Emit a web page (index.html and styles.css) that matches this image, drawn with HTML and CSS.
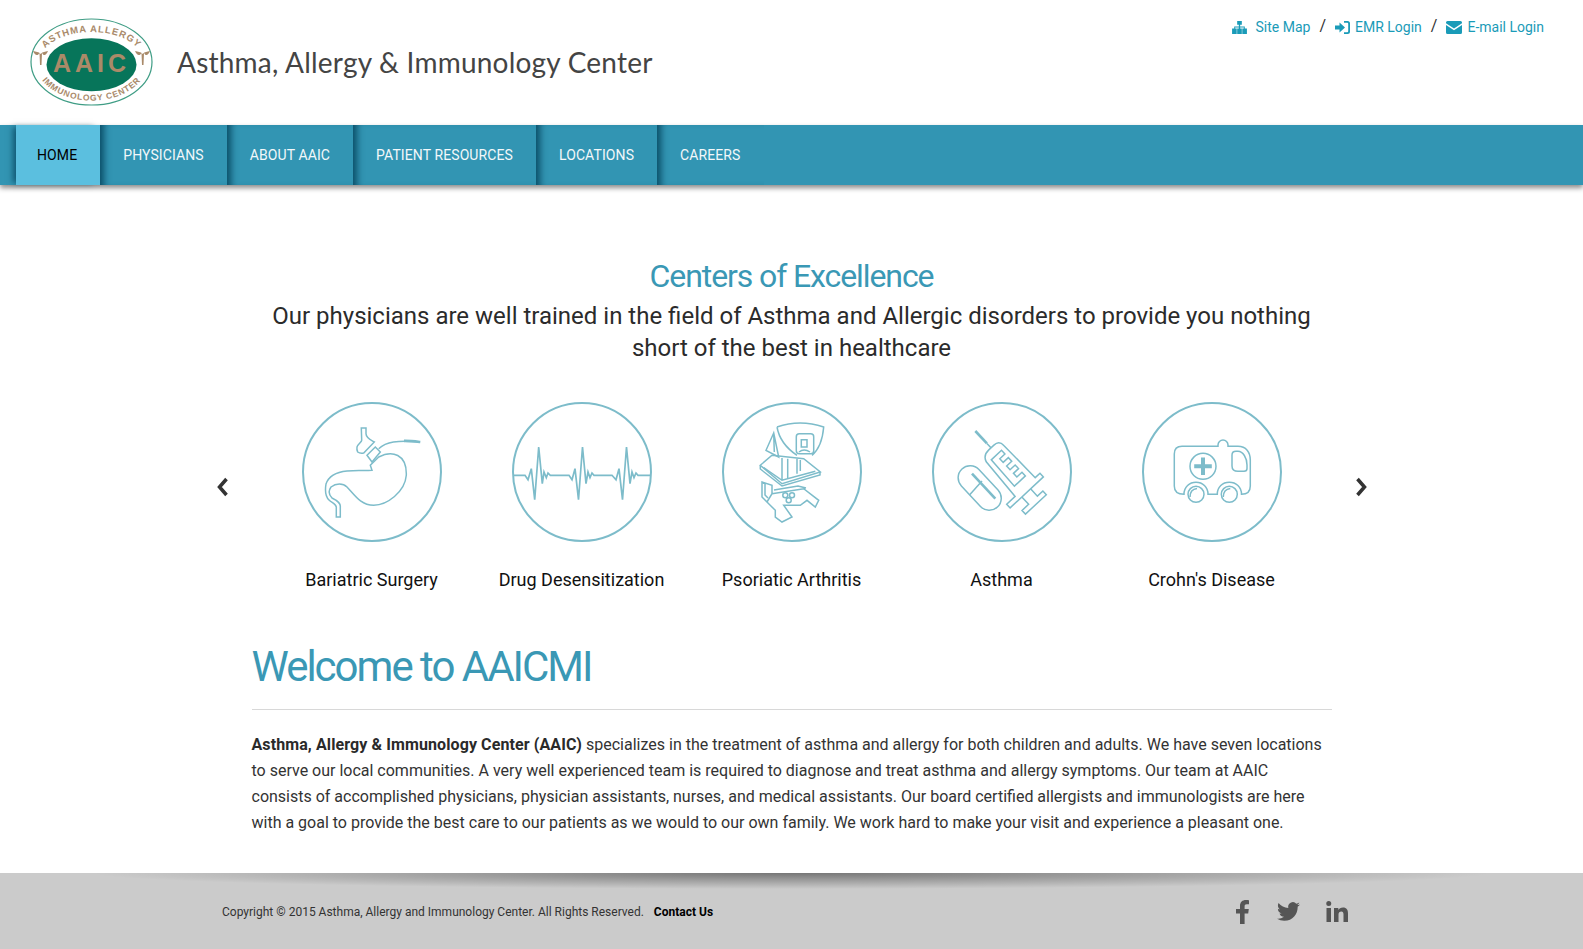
FILE: index.html
```html
<!DOCTYPE html>
<html lang="en">
    <head>
        <meta charset="UTF-8" />
        <meta name="viewport" content="width=device-width, initial-scale=1.0" />
        <title>Asthma, Allergy &amp; Immunology Center</title>
        <link rel="stylesheet" href="styles.css">
    </head>
    <body>
        <header class="top">
            <div class="brand">
                <svg class="logo" viewBox="0 0 124 90" aria-label="AAIC logo">
                    <ellipse cx="61.5" cy="44" rx="60.5" ry="43" fill="#fff" stroke="#3f9d85" stroke-width="1.2"/>
                    <ellipse cx="61.5" cy="46.7" rx="45" ry="26.5" fill="#07755a"/>
                    <defs>
                        <path id="arcTop" d="M9.5 44A52 30 0 0 1 113.5 44"/>
                        <path id="arcBot" d="M5.5 44A56 38.700 0 0 0 117.500 44"/>
                    </defs>
                    <text class="logo-arc"><textPath href="#arcTop" startOffset="50%" text-anchor="middle">ASTHMA ALLERGY</textPath></text>
                    <text class="logo-arc logo-arc-low"><textPath href="#arcBot" startOffset="50%" text-anchor="middle">IMMUNOLOGY CENTER</textPath></text>
                    <text class="logo-mark" x="61.5" y="53.5" text-anchor="middle">AAIC</text>
                    <path class="logo-staff" d="M3 33C5 38 8 38 9.500 35L10 47H11.500L12 35C13.500 38 16 38 18 33C15 34 13 33.500 10.700 36C8.500 33.500 6 34 3 33z"/>
                    <path class="logo-staff" d="M105 33C107 38 110 38 111.500 35L112 47H113.500L114 35C115.500 38 118 38 120 33C117 34 115 33.500 112.700 36C110.500 33.500 108 34 105 33z"/>
                </svg>
                <div class="site-name">Asthma, Allergy &amp; Immunology Center</div>
            </div>
            <div class="toplinks">
                <a href="#" class="toplink">
                    <svg class="ic ic-map" viewBox="0 0 16 14"><path d="M5.500 0h5v4H8.700v1.800h5V8H16v6h-5V8h1.700V7H8.700v1h1.800v6h-5V8h1.800V7H3.300v1H5v6H0V8h2.300V5.800h5V4H5.500z"/></svg>
                    Site Map
                </a>
                <span class="sep">/</span>
                <a href="#" class="toplink">
                    <svg class="ic ic-in" viewBox="0 0 15 13"><path d="M0 4.500h4.500v-3L10 6.500l-5.500 5v-3H0zM9 0h3.500A2.500 2.500 0 0 1 15 2.500v8a2.500 2.500 0 0 1-2.500 2.500H9v-1.700h3.200a1 1 0 0 0 1-1V2.700a1 1 0 0 0-1-1H9z"/></svg>
                    EMR Login
                </a>
                <span class="sep">/</span>
                <a href="#" class="toplink">
                    <svg class="ic ic-mail" viewBox="0 0 16 13"><path d="M1.500 0h13A1.500 1.500 0 0 1 16 1.500v.7L8 7.500 0 2.200v-.7A1.500 1.500 0 0 1 1.500 0zM0 4l8 5.300L16 4v7.500a1.500 1.500 0 0 1-1.500 1.500h-13A1.500 1.500 0 0 1 0 11.500z"/></svg>
                    E-mail Login
                </a>
            </div>
        </header>

        <nav class="mainnav">
            <a href="#" class="navitem active">Home</a>
            <a href="#" class="navitem">Physicians</a>
            <a href="#" class="navitem">About AAIC</a>
            <a href="#" class="navitem">Patient Resources</a>
            <a href="#" class="navitem">Locations</a>
            <a href="#" class="navitem">Careers</a>
        </nav>

        <main class="content">
            <h2 class="centers">Centers of Excellence</h2>
            <p class="lead">Our physicians are well trained in the field of Asthma and Allergic disorders to provide you nothing short of the best in healthcare</p>

            <div class="carousel">
                <svg class="arrow" viewBox="0 0 12 20"><path d="M9.500 2 2.500 10l7 8" /></svg>

                <div class="slides">
                    <div class="slide">
                        <svg class="circle" viewBox="0 0 140 140">
                            <circle cx="70" cy="70" r="69"/>
                            <path d="M59.300 26H64V31.700C64 36 69 38 72.300 40L61.700 51C59 51.500 57 51 55.700 50C54.500 48 55 45 55 45C56 42 59.700 40 59.700 38.300z"/>
                            <path d="M65 53.300 73.300 45 78.300 50 70 60z"/>
                            <path d="M76.700 46.700C84 40 95 38 118 40"/>
                            <path class="thick" d="M102 38.900C108 38.800 113 39.400 118.300 40"/>
                            <path d="M76.700 55C90 48 105 52 104.300 73.300C103 90 85 103 71.700 103.300C58 103 52 92 45 85C41 81 34 81 29 85C25.500 90 27 93 30 96C34 98 38.300 100 38.300 104V115H34.300V105C34 102 30 101 27 98C23 94 23 88 24 82C27 73 35 70 45 69C55 68 62 69 70 68.300L68.300 63.300z"/>
                        </svg>
                        <div class="slide-label">Bariatric Surgery</div>
                    </div>

                    <div class="slide">
                        <svg class="circle" viewBox="0 0 140 140">
                            <circle cx="70" cy="70" r="69"/>
                            <polyline class="ecg" points="1,73.300 13,73.300 16,77.700 19.300,66.700 22.700,97.700 26.700,45 30.300,81.700 32,70 34.300,75.700 36,71 38.300,73.300 57,73.300 60,77.700 63,66.700 66.500,97.700 70.500,45 74,81.700 76,70 78,75.700 80,71 82,73.300 100,73.300 104,77.700 107,66.700 110.500,97.700 114.500,45 118,81.700 120,70 122,75.700 124,71 126,73.300 139,73.300"/>
                        </svg>
                        <div class="slide-label">Drug Desensitization</div>
                    </div>

                    <div class="slide">
                        <svg class="circle" viewBox="0 0 140 140">
                            <circle cx="70" cy="70" r="69"/>
                            <path d="M55 25Q78 17 101.700 25Q100 45 90 53.300M55 25Q58 42 75 53.300"/>
                            <path d="M51.700 31 44 48.300 56.700 55zM51.700 31 52.300 50"/>
                            <rect x="74.300" y="31.700" width="17.400" height="20" rx="3"/>
                            <path d="M79.300 37.700H85V45H79.300zM77 50Q82 46 88 50"/>
                            <path d="M38.300 63.300 50 53.300 81.700 56.700 98.300 70 60 81.700z"/>
                            <path d="M41.700 65.700 60 78.300 93.300 69.300M60 56V78M65.700 56.700V76.700M75 56.700V71.700M78.300 58V69M38.300 63.300V67L60 84 98 73V70"/>
                            <path d="M40 80V95L45 100 50 91.700V83.300zM50 91.700 81.700 86.700 96.700 98.300 93.300 105 85 98.300 78.300 103.300H61.700L70 115 60 120 53.300 115V108.300L46.700 101.700 45 100M43 82V93L46 96M52 88 76 84 84 86"/>
                            <circle cx="63.300" cy="93.300" r="2.500"/>
                            <circle cx="70" cy="93.300" r="2.500"/>
                            <circle cx="66.700" cy="98.300" r="2.500"/>
                        </svg>
                        <div class="slide-label">Psoriatic Arthritis</div>
                    </div>

                    <div class="slide">
                        <svg class="circle" viewBox="0 0 140 140">
                            <circle cx="70" cy="70" r="69"/>
                            <g transform="translate(43.300 29) rotate(47)">
                                <path class="thick" d="M0 0H17"/>
                                <path d="M17 0H23M23 -4Q23 -11 30 -11L75 -12V-18.500H80V27H75V15.500L30 13Q23 11 23 3z"/>
                                <path d="M32 8V-6H37V1H42V-6H47V1H52V-6H57V1H62V-6H67V9z"/>
                                <path d="M80 -1H90V-8.500H95V20H90V11H80"/>
                            </g>
                            <rect x="21.700" y="74" width="52" height="24" rx="12" transform="rotate(47 47.700 86)"/>
                            <path d="M37.500 93 50 79"/>
                            <path class="thick" d="M40 71.700 63.300 96.700"/>
                        </svg>
                        <div class="slide-label">Asthma</div>
                    </div>

                    <div class="slide">
                        <svg class="circle" viewBox="0 0 140 140">
                            <circle cx="70" cy="70" r="69"/>
                            <path d="M76 44.300V43a5 5 0 0 1 10 0v1.300H96C104 44.300 108.300 50 108.300 58V84C108.300 90 105 92.300 99.500 92.300C99.500 85 94 80.300 87.300 80.300C80.500 80.300 75.300 85 75.300 92.300H66C66 85 60.500 80.300 54 80.300C47.500 80.300 42 85 42 92.300C36 92.300 32.300 90 32.300 84V52C32.300 47 35 44.300 40 44.300z"/>
                            <circle cx="61" cy="64.300" r="13"/>
                            <path class="filled" d="M59 55.500h4v6.800h6.800v4H63v6.800h-4v-6.800h-6.800v-4H59z"/>
                            <path d="M94 49.300H96C101 49.300 105 56 105 63V66.500C105 68.500 103.500 69.300 102 69.300H96C92 69.300 90 67 90 64V53C90 50.500 91.500 49.300 94 49.300z"/>
                            <circle cx="54" cy="92.300" r="8"/>
                            <circle cx="87.300" cy="92.300" r="8"/>
                            <path d="M48 95C48 90 51 87 55 86.500M81.300 95C81.300 90 84 87 88.300 86.500"/>
                        </svg>
                        <div class="slide-label">Crohn's Disease</div>
                    </div>
                </div>

                <svg class="arrow" viewBox="0 0 12 20"><path d="M2.500 2l7 8-7 8" /></svg>
            </div>

            <h1 class="welcome">Welcome to AAICMI</h1>
            <p class="about"><strong>Asthma, Allergy &amp; Immunology Center (AAIC)</strong> specializes in the treatment of asthma and allergy for both children and adults. We have seven locations to serve our local communities. A very well experienced team is required to diagnose and treat asthma and allergy symptoms. Our team at AAIC consists of accomplished physicians, physician assistants, nurses, and medical assistants. Our board certified allergists and immunologists are here with a goal to provide the best care to our patients as we would to our own family. We work hard to make your visit and experience a pleasant one.</p>
        </main>

        <footer class="foot">
            <div class="copy">Copyright © 2015 Asthma, Allergy and Immunology Center. All Rights Reserved. <a href="#" class="contact">Contact Us</a></div>
            <div class="social">
                <svg class="soc soc-fb" viewBox="0 0 13 24"><path d="M4 24V13.500H0V9h4V6C4 2 6.500 0 9.800 0c1.500 0 2.800.1 3.200.2v4.100h-2.200C9 4.300 8.600 5.200 8.600 6.500V9h4.200l-.6 4.500H8.600V24z"/></svg>
                <svg class="soc soc-tw" viewBox="0 0 24 24"><path d="M23.953 4.570a10 10 0 0 1-2.825.775 4.958 4.958 0 0 0 2.163-2.723c-.951.555-2.005.959-3.127 1.184a4.920 4.920 0 0 0-8.384 4.482C7.690 8.095 4.067 6.130 1.640 3.162a4.822 4.822 0 0 0-.666 2.475c0 1.710.870 3.213 2.188 4.096a4.904 4.904 0 0 1-2.228-.616v.060a4.923 4.923 0 0 0 3.946 4.827 4.996 4.996 0 0 1-2.212.085 4.936 4.936 0 0 0 4.604 3.417 9.867 9.867 0 0 1-6.102 2.105c-.390 0-.779-.023-1.170-.067a13.995 13.995 0 0 0 7.557 2.209c9.053 0 13.998-7.496 13.998-13.985 0-.210 0-.420-.015-.630A9.935 9.935 0 0 0 24 4.590z"/></svg>
                <svg class="soc soc-in" viewBox="0 0 22 21"><path d="M.5 7h4.500v14H.5zM2.750 0a2.500 2.500 0 1 1 0 5 2.500 2.500 0 0 1 0-5zM8 7h4.300v2c.8-1.300 2.400-2.400 4.700-2.400 3.700 0 5 2.400 5 6V21h-4.500v-7.400c0-1.900-.6-3-2.200-3-1.700 0-2.800 1.100-2.800 3V21H8z"/></svg>
            </div>
        </footer>
    </body>
</html>
```

FILE: styles.css
```css
* {
    box-sizing: border-box;
}
body {
    margin: 0;
    font-family: Roboto, Arial, sans-serif;
    color: #333;
    background: #fff;
}
a {
    text-decoration: none;
}

/* top bar */
.top {
    height: 125px;
    display: flex;
    justify-content: space-between;
    padding: 18px 39px 0 30px;
}
.brand {
    display: flex;
    align-items: flex-start;
}
.logo {
    width: 124px;
    height: 90px;
}
.logo-arc {
    font-family: "Liberation Sans", Arial, sans-serif;
    font-size: 9.5px;
    font-weight: bold;
    letter-spacing: .9px;
    fill: #a98a6a;
}
.logo-arc-low {
    font-size: 8.5px;
    letter-spacing: .8px;
}
.logo-mark {
    font-family: "Liberation Sans", Arial, sans-serif;
    font-size: 25px;
    font-weight: bold;
    letter-spacing: 4px;
    fill: #ab8a68;
}
.logo-staff {
    fill: #a98a6a;
}
.site-name {
    margin: 25px 0 0 23px;
    font-family: Lato, "Open Sans", sans-serif;
    font-size: 28px;
    line-height: 38px;
    letter-spacing: .22px;
    color: #444;
}
.toplinks {
    display: flex;
    align-items: center;
    height: 20px;
    margin-top: -1px;
    font-size: 14px;
}
.toplink {
    display: flex;
    align-items: center;
    color: #1a9bb8;
}
.sep {
    margin: 0 9px;
    font-size: 16px;
    color: #333;
    position: relative;
    top: -2px;
}
.ic {
    fill: #1a9bb8;
    margin-right: 5px;
}
.ic-map {
    width: 15px;
    height: 13px;
    margin-right: 9px;
}
.ic-in {
    width: 15px;
    height: 13px;
}
.ic-mail {
    width: 16px;
    height: 13px;
}

/* nav */
.mainnav {
    height: 60px;
    padding-left: 16px;
    display: flex;
    background: #3295b3;
    box-shadow: 0 3px 5px rgba(0, 0, 0, 0.45);
    position: relative;
}
.navitem {
    display: flex;
    align-items: center;
    padding: 0 23px;
    font-size: 14px;
    letter-spacing: .1px;
    text-transform: uppercase;
    color: #f2f8fa;
    box-shadow: inset 9px 0 7px -5px rgba(0, 60, 85, 0.8);
}
.navitem.active {
    padding: 0 23px 0 21px;
    background: #5bbfdf;
    color: #000;
    box-shadow: -5px 0 6px -2px rgba(0, 60, 85, 0.7);
}

/* content */
.content {
    width: 1080px;
    margin: 0 auto;
    padding-top: 71px;
    height: 688px;
}
.centers {
    margin: 0;
    font-size: 32px;
    line-height: 40px;
    font-weight: 400;
    letter-spacing: -1.1px;
    text-align: center;
    color: #3a98b5;
}
.lead {
    margin: 4px 0 0;
    padding: 0 20px;
    font-size: 24px;
    line-height: 32px;
    text-align: center;
    color: #2b2b2b;
}
.carousel {
    display: flex;
    justify-content: center;
    gap: 38px;
    margin: 38px -40px 0;
}
.arrow {
    width: 12px;
    height: 20px;
    margin-top: 75px;
    flex: none;
}
.arrow path {
    fill: none;
    stroke: #333;
    stroke-width: 3.5;
}
.slides {
    display: flex;
}
.slide {
    width: 210px;
    text-align: center;
}
.circle {
    display: block;
    width: 140px;
    height: 140px;
    margin: 0 auto;
    fill: none;
    stroke: #7dbcca;
    stroke-width: 1.5;
}
.circle circle:first-child {
    stroke-width: 2;
}
.circle .thick {
    stroke-width: 2.6;
}
.circle .filled {
    fill: #7dbcca;
    stroke: none;
}
.circle .ecg {
    stroke-width: 1.7;
}
.slide-label {
    margin-top: 26px;
    font-size: 18px;
    line-height: 24px;
    color: #111;
}
.welcome {
    margin: 49px 0 0;
    padding-bottom: 16px;
    border-bottom: 1px solid #d8d8d8;
    font-size: 42px;
    line-height: 52px;
    font-weight: 400;
    letter-spacing: -2px;
    color: #3a98b5;
}
.about {
    margin: 22px 0 0;
    font-size: 16px;
    line-height: 26px;
    color: #333;
}
.about strong {
    font-weight: 700;
    letter-spacing: .1px;
    color: #2a2a2a;
}

/* footer */
.foot {
    height: 76px;
    padding: 1px 235px 0 222px;
    display: flex;
    align-items: center;
    justify-content: space-between;
    background: radial-gradient(ellipse 700px 16px at 50% 0, rgba(0, 0, 0, 0.42), rgba(0, 0, 0, 0)) #cbcbcb;
}
.copy {
    font-size: 12px;
    color: #333;
}
.contact {
    margin-left: 7px;
    font-weight: 700;
    color: #000;
}
.social {
    display: flex;
    align-items: center;
}
.soc {
    fill: #555;
}
.soc-fb {
    width: 13px;
    height: 24px;
    margin-right: 28px;
}
.soc-tw {
    width: 23px;
    height: 23px;
    margin-right: 26px;
}
.soc-in {
    width: 22px;
    height: 21px;
}
```
